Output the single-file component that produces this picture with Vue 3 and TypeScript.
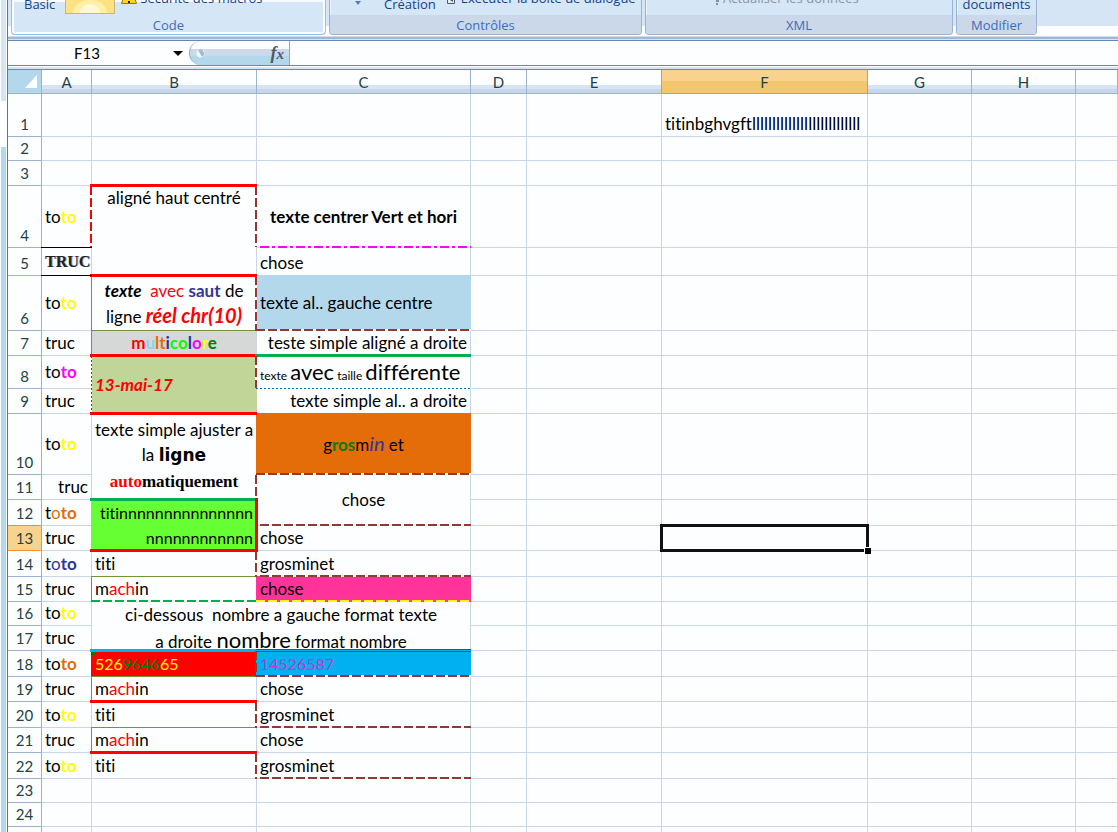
<script setup lang="ts">
interface Run { t: string; k?: string }
interface Cell {
  lines?: Run[][]
  cls?: string
  edges?: string[]
  cols?: number
  rows?: number
  mark?: boolean
}
interface Row { n: number; h: number; cells: Cell[] }

const columns = ['A', 'B', 'C', 'D', 'E', 'F', 'G', 'H', 'I']

const r = (t: string, k = ''): Run => ({ t, k })
const c = (lines: Run[][], cls = '', edges: string[] = [], more: Partial<Cell> = {}): Cell =>
  ({ lines, cls, edges, ...more })
const toto = (k: string): Run[][] => [[r('to'), r('to', 'b ' + k)]]
const truc: Run[][] = [[r('truc')]]
const titi: Run[][] = [[r('titi')]]
const chose: Run[][] = [[r('chose')]]
const grosminet: Run[][] = [[r('grosminet')]]
const machin: Run[][] = [[r('m'), r('ach', 'red'), r('in')]]
const blank = (n: number): Cell[] => Array.from({ length: n }, () => ({}))
const active: Cell = { cls: 'active' }

const sheet: Row[] = [
  { n: 1, h: 43, cells: [...blank(5), c([[r('titinbghvgftlllllllllllllllllllllllllll')]]), ...blank(3)] },
  { n: 2, h: 24, cells: blank(9) },
  { n: 3, h: 25, cells: blank(9) },
  { n: 4, h: 62, cells: [
    c(toto('yellow'), 'mid', ['bottom thin black']),
    c([[r('aligné haut centré')]], 'top center', ['top thick red', 'left dash red half', 'right dash brown half', 'bottom thick red'], { rows: 2 }),
    c([[r('texte centrer Vert et hori', 'b')]], 'mid center', ['bottom dashdot magenta inset']),
    ...blank(6)] },
  { n: 5, h: 28, cells: [c([[r('TRUC', 'engraved')]], '', ['bottom thin black']), c(chose), ...blank(6)] },
  { n: 6, h: 55, cells: [
    c(toto('yellow'), 'mid'),
    c([[r('texte', 'b i'), r('\u00a0 avec ', 'red'), r('saut', 'b navy'), r(' de')],
      [r('ligne '), r('réel chr(10)', 'b i red large')]], 'mid center', ['left thin steel', 'right dash brown', 'bottom thin olive']),
    c([[r('texte al.. gauche centre')]], 'mid fill-sky', ['bottom dash brown']),
    ...blank(6)] },
  { n: 7, h: 25, cells: [
    c(truc),
    c([[r('m', 'red'), r('u', 'sky'), r('l', 'orange'), r('t', 'orange'), r('i', 'navy'), r('co', 'lime'), r('l', 'navy'), r('o', 'magenta'), r('r', 'yellow'), r('e', 'green')]], 'center bold fill-grey', ['left thin steel', 'bottom thick red']),
    c([[r('teste simple aligné a droite')]], 'right', ['bottom thick emerald']),
    ...blank(6)] },
  { n: 8, h: 33, cells: [
    c(toto('magenta'), 'mid'),
    c([[r('13-mai-17', 'b i red')]], 'mid fill-sage', ['left dots red', 'right dash brown first', 'bottom thick red'], { rows: 2 }),
    c([[r('texte ', 'small'), r('avec', 'big'), r(' taille ', 'small'), r('différente', 'big')]], '', ['bottom dots blue']),
    ...blank(6)] },
  { n: 9, h: 25, cells: [c(truc), c([[r('texte simple al.. a droite')]], 'right'), ...blank(6)] },
  { n: 10, h: 61, cells: [
    c(toto('yellow'), 'mid'),
    c([[r('texte simple ajuster a')], [r('la '), r('ligne', 'black-face')], [r('auto', 'poster red'), r('matiquement', 'poster')]], 'mid center snug', ['right dash brown last', 'bottom thick emerald'], { rows: 2 }),
    c([[r('g'), r('ros', 'b green'), r('m'), r('in', 'i navy large'), r(' et')]], 'mid center fill-orange', ['bottom dash brown']),
    ...blank(6)] },
  { n: 11, h: 25, cells: [c(truc, 'right'), c(chose, 'mid center', ['bottom dash brown inset'], { rows: 2 }), ...blank(6)] },
  { n: 12, h: 26, cells: [
    c([[r('t'), r('o', 'orange'), r('to', 'b orange')]]),
    c([[r('titinnnnnnnnnnnnnnn')], [r('nnnnnnnnnnnn')]], 'mid right compact fill-lime', ['bottom thick red', 'right thick red'], { rows: 2 }),
    ...blank(6)] },
  { n: 13, h: 25, cells: [c(truc), c(chose), ...blank(2), active, ...blank(3)] },
  { n: 14, h: 26, cells: [
    c([[r('t'), r('o', 'navy'), r('to', 'b navy')]]),
    c(titi, '', ['right dash brown', 'bottom thin olive']),
    c(grosminet, '', ['bottom dash brown inset']), ...blank(6)] },
  { n: 15, h: 25, cells: [
    c(truc), c(machin, '', ['left thin steel', 'bottom dash emerald']),
    c(chose, 'fill-pink', ['bottom dash yellow on-pink']), ...blank(6)] },
  { n: 16, h: 24, cells: [
    c(toto('yellow')),
    c([[r('ci-dessous\u00a0 nombre a gauche format texte')], [r('a droite '), r('nombre', 'big'), r(' format nombre')]], 'top center capped', [], { rows: 2, cols: 2 }),
    ...blank(6)] },
  { n: 17, h: 25, cells: [c(truc), ...blank(6)] },
  { n: 18, h: 26, cells: [
    c(toto('orange')),
    c([[r('526', 'yellow'), r('9646', 'green'), r('65', 'yellow')]], 'compact fill-red', ['top thick cyan', 'right dash brown clear', 'bottom thin olive'], { mark: true }),
    c([[r('14526587', 'violet')]], 'compact fill-cyan', ['top double', 'bottom dash brown']), ...blank(6)] },
  { n: 19, h: 25, cells: [c(truc), c(machin, '', ['left thin steel', 'bottom thick red']), c(chose), ...blank(6)] },
  { n: 20, h: 26, cells: [c(toto('yellow')), c(titi, '', ['right dash brown', 'bottom thin olive']), c(grosminet, '', ['bottom dash brown inset']), ...blank(6)] },
  { n: 21, h: 25, cells: [c(truc), c(machin, '', ['left thin steel', 'bottom thick red']), c(chose), ...blank(6)] },
  { n: 22, h: 26, cells: [c(toto('yellow')), c(titi, '', ['right dash brown']), c(grosminet, '', ['bottom dash brown inset']), ...blank(6)] },
  { n: 23, h: 24, cells: blank(9) },
  { n: 24, h: 24, cells: blank(9) },
]
</script>

<template>
  <div class="window">
    <div class="gutter"><i class="g-top"></i><i class="g-gap"></i><i class="g-rest"></i></div>
    <div class="main">
      <header class="ribbon">
        <section class="group code">
          <div class="tools">
            <button class="low">Basic</button>
            <svg class="macro" width="50" height="14" viewBox="0 0 50 14">
              <rect x="0.5" y="-4" width="49" height="17.5" fill="#fde283" stroke="#c9b47c" />
              <path d="M8 13a17 13 0 0 1 34 0z" fill="#fff0a8" />
              <path d="M15 13a10 9 0 0 1 20 0z" fill="#fffbd0" />
            </svg>
            <svg class="warn" width="16" height="6" viewBox="0 0 16 6">
              <path d="M3 -3L0.500 4.500H15.500L13 -3z" fill="#ffd21c" stroke="#9a7a10" />
              <path d="M7 -2h2v3h-2zM7 2h2v2h-2z" fill="#222" />
            </svg>
            <button class="high">Sécurité des macros</button>
          </div>
          <h2>Code</h2>
        </section>
        <section class="group controls">
          <div class="tools">
            <svg class="caret" width="6" height="4" viewBox="0 0 6 4"><path d="M0 0h6L3 4z" fill="#5a7db5" /></svg>
            <button class="low">Création</button>
            <svg class="page" width="8" height="4" viewBox="0 0 8 4"><path d="M0.500 -2V3.500H7.500V-2" fill="#e8eef8" stroke="#4a5878" /><path d="M3 0h3v2z" fill="#4a5878" /></svg>
            <button class="high">Exécuter la boîte de dialogue</button>
          </div>
          <h2>Contrôles</h2>
        </section>
        <section class="group xml">
          <div class="tools">
            <svg class="bang" width="4" height="5" viewBox="0 0 4 5"><path d="M1 0h3v2h-3zM1 3h2v2h-2z" fill="#8590a5" /></svg>
            <button class="high" disabled>Actualiser les données</button>
          </div>
          <h2>XML</h2>
        </section>
        <section class="group modify">
          <div class="tools"><button class="low">documents</button></div>
          <h2>Modifier</h2>
        </section>
        <div class="ribbon-rest"></div>
      </header>

      <div class="formula-bar">
        <input class="name-box" aria-label="Zone Nom" value="F13" />
        <button class="name-list" aria-label="Liste des noms">
          <svg width="10" height="5" viewBox="0 0 10 5"><path d="M0 0h10L5 5z" fill="#000" /></svg>
        </button>
        <div class="pill">
          <svg width="9" height="9" viewBox="0 0 9 9"><circle cx="4.500" cy="4.500" r="4" fill="#f3f7fb" /><path d="M2 1a4 4 0 0 1 4 7z" fill="#a9b9cc" /></svg>
          <button class="fx" aria-label="Insérer une fonction"><em>f</em><em class="sub">x</em></button>
        </div>
        <input class="formula" aria-label="Barre de formule" />
      </div>

      <table class="sheet">
        <colgroup>
          <col class="w-head" /><col class="w-a" /><col class="w-b" /><col class="w-c" /><col class="w-d" />
          <col class="w-e" /><col class="w-f" /><col class="w-g" /><col class="w-g" /><col />
        </colgroup>
        <thead>
          <tr>
            <th class="corner"><svg width="12" height="13" viewBox="0 0 12 13"><path d="M12 0V13H0z" fill="#fdfeff" /></svg></th>
            <th v-for="name in columns" :key="name" scope="col" :class="{ current: name === 'F', before: name === 'E' }"><template v-if="name !== 'I'">{{ name }}</template></th>
          </tr>
        </thead>
        <tbody>
          <tr v-for="row in sheet" :key="row.n" :style="{ height: row.h + 'px' }">
            <th scope="row" :class="{ current: row.n === 13, above: row.n === 12 }">{{ row.n }}</th>
            <td v-for="(cell, i) in row.cells" :key="i" :class="cell.cls" :rowspan="cell.rows" :colspan="cell.cols">
              <div v-if="cell.lines" class="text">
                <p v-for="(line, j) in cell.lines" :key="j"><span v-for="(run, q) in line" :key="q" :class="run.k">{{ run.t }}</span></p>
              </div>
              <i v-for="edge in cell.edges" :key="edge" class="edge" :class="edge"></i>
              <i v-if="cell.mark" class="mark"></i>
              <i v-if="cell.cls === 'active'" class="cursor"></i>
            </td>
          </tr>
          <tr class="spare"><th></th><td v-for="n in 9" :key="n"></td></tr>
        </tbody>
      </table>
    </div>
  </div>
</template>

<style>
html, body { height: 100%; overflow: hidden; background: #fdfeff; }
#app { height: 100%; }
</style>

<style scoped>
* { box-sizing: border-box; }
.window { display: flex; height: 100%; overflow: hidden; font-family: Lato, "Liberation Sans", sans-serif; font-size: 15px; color: #000; }
.gutter { display: flex; flex-direction: column; flex: none; width: 8px; padding: 0 1px; border-right: 1px solid #56789f; }
.gutter i { display: block; }
.g-top { height: 101px; background: #d5e5f6; }
.g-gap { height: 46px; }
.g-rest { flex: 1; background: #b3d8ec; }
.main { flex: 1; min-width: 0; }
button { border: 0; padding: 0; background: none; font: inherit; color: inherit; white-space: nowrap; }
input { border: 0; padding: 0; outline: 0; background: none; font: inherit; min-width: 0; }

.ribbon { display: flex; height: 41px; padding-left: 3px; gap: 3px; background: linear-gradient(#d5e5f6 0 26px, #fdfeff 26px 36px, #d0dcec 36px 37px, #a3b7d5 37px 39px, #d5e5f6 39px 40px, #5f8ab5 40px); font-family: "Open Sans", "Liberation Sans", sans-serif; font-size: 13px; color: #15428b; }
.group { height: 35px; overflow: hidden; border: 1px solid #9ab3d0; border-top: 0; border-radius: 0 0 4px 4px; background: #d5e6f7; box-shadow: inset 1px 0 #eaf3fc; }
.group h2 { margin: 0; height: 20px; line-height: 21px; text-align: center; font-size: 13px; font-weight: 400; color: #3e6db5; background: #cad8ea; }
.group.code { border-color: #8fc6e8; box-shadow: inset 0 0 0 2px #f8fcff; }
.group.code h2 { background: none; }
.code { width: 315px; }
.controls { width: 313px; }
.xml { width: 308px; }
.modify { width: 81px; }
.ribbon-rest { flex: 1; }
.tools { display: flex; align-items: flex-end; height: 15px; }
.tools button { line-height: 18px; }
.tools button.low { margin-bottom: 2px; }
.tools button.high { margin-bottom: 8px; }
.tools button:disabled { color: #8b95a3; }
.tools svg { flex: none; }
.code .tools { padding-left: 12px; }
.macro { margin: 0 6px 1px 10px; }
.warn { margin: 0 3px 10px 0; }
.controls .tools { padding-left: 25px; }
.caret { margin: 0 23px 10px 0; }
.page { margin: 0 6px 11px 11px; }
.xml .tools { padding-left: 69px; }
.bang { margin: 0 4px 10px 0; }
.modify .tools { justify-content: center; }

.formula-bar { display: flex; height: 29px; border-bottom: 1px solid #5f8ab5; background: linear-gradient(#fdfeff 0 24px, #5f8ab5 24px 25px, #fdfeff 25px 26px, #d5e5f6 26px); padding-bottom: 3px; }
.name-box { width: 158px; text-align: center; height: 24px; }
.name-list { width: 23px; height: 24px; display: flex; align-items: center; justify-content: center; }
.pill { display: flex; align-items: center; justify-content: space-between; width: 101px; height: 24px; padding: 0 5px 0 6px; border: 1px solid #8aa9cb; border-width: 0 1px 0 1px; border-radius: 12px 0 0 12px; background: linear-gradient(#fdfeff 0 8px, #cdd9ea 8px 15px, #b3d8ec 15px); }
.fx { font-family: "Liberation Serif", serif; font-weight: 700; font-size: 18px; color: #505868; line-height: 20px; }
.fx .sub { font-size: 15px; }
.formula { flex: 1; height: 24px; padding-left: 4px; }

.sheet { width: 100%; table-layout: fixed; border-collapse: separate; border-spacing: 0; line-height: 22px; }
.w-head { width: 34px; }
.w-a { width: 50px; }
.w-b { width: 165px; }
.w-c { width: 214px; }
.w-d { width: 56px; }
.w-e { width: 135px; }
.w-f { width: 206px; }
.w-g { width: 104px; }
th { padding: 0; font-weight: 400; color: #1f4247; border-right: 1px solid #9ab3d0; border-bottom: 1px solid #9ab3d0; }
thead th { height: 24px; vertical-align: bottom; background: linear-gradient(#fdfeff 0 15px, #d5e5f6 15px 19px, #cad6e8 19px); }
thead th.current { background: linear-gradient(#f9d28e 0 11px, #f2c76f 11px); border-color: #f29436; }
thead th.before { border-right-color: #f29436; }
thead th.corner { background: #b3d8ec; padding-right: 4px; text-align: right; vertical-align: middle; }
.corner svg { display: block; margin-left: auto; }
tbody th { vertical-align: bottom; padding-bottom: 1px; }
tbody th.current { background: #f9d28e; border-color: #f29436; }
tbody th.above { border-bottom-color: #f29436; }
.spare { height: 24px; }

td { position: relative; padding: 0 3px 1px; font-size: 17px; font-variant-ligatures: none; vertical-align: bottom; border-right: 1px solid #cad6e8; border-bottom: 1px solid #cad6e8; }
.text { position: relative; z-index: 2; }
p { margin: 0; white-space: nowrap; }
p + p, p:not(:last-child) { line-height: 25px; }
td.mid { vertical-align: middle; padding-bottom: 0; }
td.top { vertical-align: top; padding-top: 1px; }
td.center { text-align: center; }
td.right { text-align: right; }
td.bold { font-weight: 700; }
td.compact { font-size: 16px; }
td.snug { padding-bottom: 2px; }
td.capped { padding-top: 0; }
td.capped .text { height: 46px; }

[class*="fill-"]::before { content: ""; position: absolute; inset: -1px; background: var(--fill); z-index: 1; }
.fill-sky { --fill: #b3d8ec; }
.fill-grey { --fill: #d6d8d8; }
.fill-sage { --fill: #c2d598; }
.fill-orange { --fill: #e46d0a; }
.fill-lime { --fill: #66ff33; }
.fill-pink { --fill: #ff3399; }
.fill-red { --fill: #ff0000; }
.fill-cyan { --fill: #00b0f0; }

.b { font-weight: 700; }
.i { font-style: italic; }
.large { font-size: 20px; }
.big { font-size: 22px; }
.small { font-size: 12px; }
.engraved { font-family: "Liberation Serif", serif; font-weight: 700; font-size: 16px; line-height: 24px; color: #222; text-shadow: 1px 0 #9ab; }
.black-face { font-family: "DejaVu Sans", sans-serif; font-weight: 700; }
.poster { font-family: "Liberation Serif", serif; font-weight: 700; }
span.red { color: #f00; }
span.yellow { color: #ff0; }
span.navy { color: #333399; }
span.magenta { color: #f0f; }
span.violet { color: #cc33cc; }
span.orange { color: #e46d0a; }
span.sky { color: #8fd0f5; }
span.lime { color: #0f0; }
span.green { color: #008000; }

.edge { position: absolute; z-index: 4; --gap: #fdfeff; }
.edge.red { --c: #ff0000; }
.edge.brown { --c: #953735; z-index: 5; }
.edge.black { --c: #000; }
.edge.magenta { --c: #ff00ff; }
.edge.steel { --c: #4f8bc5; z-index: 3; }
.edge.olive { --c: #76933c; }
.edge.emerald { --c: #00b050; }
.edge.blue { --c: #0070c0; }
.edge.yellow { --c: #ffff00; }
.edge.cyan { --c: #00b0f0; }
.edge.on-pink { --gap: #ff3399; }
.edge.clear { --gap: transparent; }
.edge.top, .edge.bottom { left: -1px; right: -1px; --dir: to right; }
.edge.left, .edge.right { top: 0; bottom: -1px; --dir: to bottom; }
.thin, .thick { background: var(--c); }
.dash { background: repeating-linear-gradient(var(--dir), var(--c) 0 9px, var(--gap) 9px 12px); }
.dashdot { background: repeating-linear-gradient(var(--dir), var(--c) 0 9px, var(--gap) 9px 12px, var(--c) 12px 15px, var(--gap) 15px 18px); }
.dots { background: repeating-linear-gradient(var(--dir), var(--c) 0 2px, var(--gap) 2px 4px); }
.bottom.thin, .bottom.dots { height: 1px; bottom: -1px; }
.bottom.dash, .bottom.dashdot { height: 2px; bottom: -1px; }
.edge.bottom.inset { left: 3px; }
.edge.bottom.thick { height: 3px; bottom: -2px; left: -2px; }
.edge.top.thick { height: 3px; top: -2px; left: -2px; }
.top.double { height: 3px; top: -2px; background: linear-gradient(#c01830 0 1px, #00b0f0 1px 2px, #c01830 2px); z-index: 4; }
.left.thin, .left.dots { width: 1px; left: -1px; }
.left.dash { width: 2px; left: -2px; }
.right.dash { width: 2px; right: -1px; }
.edge.right.thick { width: 3px; right: -2px; top: -2px; bottom: -2px; z-index: 6; }
.edge.half { bottom: 28px; }
.edge.first { bottom: 25px; }
.edge.last { top: 61px; }
.mark { position: absolute; z-index: 3; left: -1px; top: 1px; border-top: 6px solid #008000; border-right: 6px solid transparent; }
.cursor { position: absolute; z-index: 7; inset: -2px; border: 3px solid #111; }
.cursor::after { content: ""; position: absolute; right: -5px; bottom: -5px; width: 6px; height: 6px; background: #000; border: solid #fdfeff; border-width: 1px 0 0 1px; }
</style>
